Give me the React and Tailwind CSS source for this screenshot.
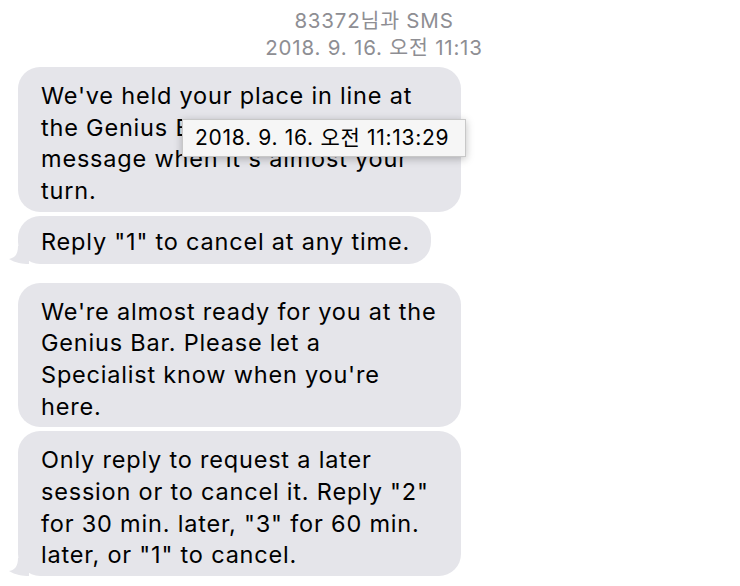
import React from 'react';

const FONT = { fontFamily: 'Inter, "Noto Sans CJK KR", sans-serif' };

const MESSAGES = [
  { lines: ["We've held your place in line at", "the Genius Bar. You'll get a", "message when it's almost your", 'turn.'], wide: true },
  { lines: ['Reply "1" to cancel at any time.'], tail: true },
  { lines: ["We're almost ready for you at the", 'Genius Bar. Please let a', "Specialist know when you're", 'here.'], wide: true, gap: true },
  { lines: ['Only reply to request a later', 'session or to cancel it. Reply "2"', 'for 30 min. later, "3" for 60 min.', 'later, or "1" to cancel.'], wide: true, tail: true },
];

function Tail() {
  return (
    <svg className="absolute left-[-9px] bottom-0" width="20" height="18" viewBox="0 0 20 18">
      <path d="M20 0 L20 18 C14 18 6 17 0 13 C6 12 9 8 9 0 Z" fill="#e5e5ea" />
    </svg>
  );
}

function Bubble({ m }) {
  return (
    <div className={`relative ${m.wide ? 'w-[443px]' : 'w-fit'} ${m.gap ? 'mt-[19px]' : 'mt-[4px]'}`}>
      <div className={`bg-[#e5e5ea] rounded-[22px] pl-[23px] pr-[21px] ${m.wide ? 'pt-[13px] pb-[5px]' : 'pt-[10px] pb-[6px]'} text-[23.5px] tracking-[0.8px] leading-[31.7px] text-black`}>
        {m.lines.map((l, i) => (
          <div key={i} className="whitespace-nowrap">{l}</div>
        ))}
      </div>
      {m.tail && <Tail />}
    </div>
  );
}

export default function App() {
  return (
    <div className="w-[740px] h-[586px] bg-white overflow-hidden relative" style={FONT}>
      <div className="text-center text-[#8e8e93] text-[20.5px] tracking-[0.8px] leading-[27px] pt-[7px] pl-[8px]">
        <div>83372님과 SMS</div>
        <div>2018. 9. 16. 오전 11:13</div>
      </div>
      <div className="pl-[18px] pt-[2px]">
        {MESSAGES.map((m, i) => <Bubble key={i} m={m} />)}
      </div>

      {/* hover tooltip */}
      <div className="absolute left-[182px] top-[119px] w-[284px] h-[38px] bg-[#f6f6f6] border border-[#c8c8c8] shadow-[0_2px_8px_rgba(0,0,0,0.25)] pl-[12px] text-[21px] tracking-[0.7px] leading-[36px] text-black whitespace-nowrap">
        2018. 9. 16. 오전 11:13:29
      </div>
    </div>
  );
}
